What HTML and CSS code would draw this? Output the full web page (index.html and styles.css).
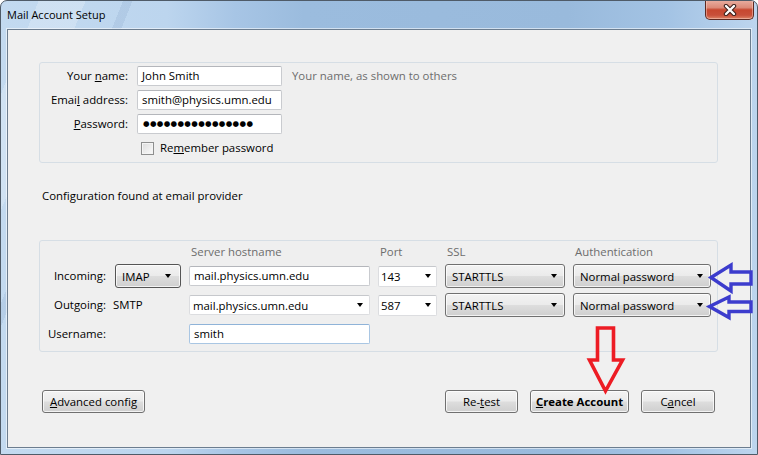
FILE: index.html
```html
<!DOCTYPE html>
<html>
<head>
<meta charset="utf-8">
<title>Mail Account Setup</title>
<link rel="stylesheet" href="styles.css">
</head>
<body>
<div class="window">
  <div class="titlebar">
    <span class="title">Mail Account Setup</span>
    <div class="close">
      <svg width="16" height="12" viewBox="0 0 16 12">
        <path d="M4 2 L12 10 M12 2 L4 10" stroke="#3a1f1a" stroke-width="4.4" stroke-linecap="round"/>
        <path d="M4 2 L12 10 M12 2 L4 10" stroke="#ffffff" stroke-width="2.4" stroke-linecap="round"/>
      </svg>
    </div>
  </div>
  <div class="client">
    <div class="box identity">
      <label class="lbl">Your <u>n</u>ame:</label>
      <div class="field">John Smith</div>
      <span class="hint">Your name, as shown to others</span>

      <label class="lbl">Emai<u>l</u> address:</label>
      <div class="field">smith@physics.umn.edu</div>
      <span></span>

      <label class="lbl"><u>P</u>assword:</label>
      <div class="field pw">●●●●●●●●●●●●●●●●</div>
      <span></span>

      <span></span>
      <div class="check"><span class="cb"></span><span>Re<u>m</u>ember password</span></div>
      <span></span>
    </div>

    <div class="status">Configuration found at email provider</div>

    <div class="box server">
      <span></span>
      <span></span>
      <span class="head">Server hostname</span>
      <span class="head">Port</span>
      <span class="head">SSL</span>
      <span class="head">Authentication</span>

      <span class="slbl">Incoming:</span>
      <div class="btn sel imap"><span>IMAP</span><i class="tri"></i></div>
      <div class="field host">mail.physics.umn.edu</div>
      <div class="combo port"><span>143</span><i class="tri"></i></div>
      <div class="btn sel"><span>STARTTLS</span><i class="tri"></i></div>
      <div class="btn sel"><span>Normal password</span><i class="tri"></i></div>

      <span class="slbl">Outgoing:</span>
      <span class="smtp">SMTP</span>
      <div class="combo host2"><span>mail.physics.umn.edu</span><i class="tri"></i></div>
      <div class="combo port"><span>587</span><i class="tri"></i></div>
      <div class="btn sel"><span>STARTTLS</span><i class="tri"></i></div>
      <div class="btn sel"><span>Normal password</span><i class="tri"></i></div>

      <span class="slbl">Username:</span>
      <span></span>
      <div class="field host user">smith</div>
    </div>

    <div class="actions">
      <div class="btn push adv"><span><u>A</u>dvanced config</span></div>
      <div class="spacer"></div>
      <div class="btn push retest"><span>Re-<u>t</u>est</span></div>
      <div class="btn push create"><span><u>C</u>reate Account</span></div>
      <div class="btn push cancel"><span>C<u>a</u>ncel</span></div>
    </div>
  </div>

  <svg class="annot" width="758" height="455" viewBox="0 0 758 455">
    <polygon points="711,277.5 731,265 731,272 751,272 751,284 731,284 731,291" fill="none" stroke="#3c3ccd" stroke-width="3.4" stroke-linejoin="miter"/>
    <polygon points="709.5,306.5 729,297 729,302 751,302 751,311.5 729,311.5 729,317.5" fill="none" stroke="#3c3ccd" stroke-width="3.4" stroke-linejoin="miter"/>
    <polygon points="597.5,328 613.5,328 613.5,360 622.5,360 605.5,391 589.5,360 597.5,360" fill="none" stroke="#ed1c24" stroke-width="3.6" stroke-linejoin="miter"/>
  </svg>
</div>
</body>
</html>
```

FILE: styles.css
```css
* { box-sizing: border-box; }
html, body { margin: 0; padding: 0; }
body {
  width: 758px;
  height: 455px;
  overflow: hidden;
  font-family: "Open Sans", "Noto Sans", sans-serif;
  font-size: 11.4px;
  color: #000;
  background: #ffffff;
}
u { text-decoration: underline; text-underline-offset: 1px; }

.window {
  position: relative;
  width: 758px;
  height: 455px;
  border: 1px solid #4f5b68;
  border-radius: 7px 7px 0 0;
  overflow: hidden;
  display: flex;
  flex-direction: column;
  background:
    linear-gradient(112deg, rgba(255,255,255,0) 0 4%, rgba(255,255,255,0.22) 4% 9%, rgba(255,255,255,0) 9% 13%, rgba(120,150,190,0.18) 13% 14%, rgba(255,255,255,0) 14% 100%),
    linear-gradient(90deg, #c3daf0 0%, #bcd5ee 22%, #a7c5e5 31%, #9bbcde 40%, #99badc 75%, #a3c3e4 88%, #bdd5ee 100%);
}

.titlebar {
  height: 28px;
  display: flex;
  justify-content: space-between;
  align-items: flex-start;
}
.title {
  padding: 6px 0 0 6px;
  font-size: 11px;
  line-height: 16px;
  color: #000;
}
.close {
  width: 49px;
  height: 20px;
  margin: -1px 3px 0 0;
  border: 1px solid #5e2a22;
  border-top: none;
  border-radius: 0 0 5px 5px;
  background: linear-gradient(#eab0a2 0%, #dc8a78 40%, #c7472f 52%, #c9503a 80%, #dd8466 100%);
  box-shadow: inset 0 0 0 1px rgba(255,220,210,0.45);
  display: flex;
  align-items: center;
  justify-content: center;
}
.close svg { display: block; }

.client {
  flex: 1;
  margin: 0 6px 6px 6px;
  border: 1px solid #6c7d8f;
  box-shadow: 0 0 0 1px rgba(255,255,255,0.55);
  background: #f0f0f0;
  padding: 32px 32px 0 31px;
  display: flex;
  flex-direction: column;
}

.box {
  border: 1px solid #d6dee5;
  border-radius: 3px;
  background: #efefef;
}

.identity {
  display: grid;
  grid-template-columns: 88px 145px 1fr;
  grid-template-rows: 20px 20px 20px 20px;
  column-gap: 9px;
  row-gap: 4px;
  padding: 3px 0 4px 0;
}
.lbl {
  text-align: right;
  line-height: 20px;
  white-space: nowrap;
}
.hint {
  margin-left: 1px;
  line-height: 20px;
  color: #6d6d6d;
}
.field {
  height: 20px;
  border: 1px solid #c9cbcf;
  border-top-color: #b4b6bb;
  border-radius: 2px;
  background: #fff;
  padding: 0 4px;
  line-height: 18px;
  white-space: nowrap;
  overflow: hidden;
}
.pw {
  font-family: "DejaVu Sans", sans-serif;
  font-size: 7.5px;
  letter-spacing: 0.35px;
  padding-left: 5px;
}
.check {
  display: flex;
  align-items: center;
  gap: 6px;
  padding-left: 4px;
  line-height: 20px;
  white-space: nowrap;
}
.cb {
  width: 13px;
  height: 13px;
  border: 1px solid #8e8f8f;
  background: linear-gradient(135deg, #dcdcdc, #fbfbfb);
  box-shadow: inset 0 0 0 1px #f4f4f4;
}

.status {
  margin: 25px 0 0 3px;
  line-height: 16px;
}

.server {
  margin-top: 36px;
  display: grid;
  grid-template-columns: 67px 66px 181px 59px 120px 138px;
  grid-template-rows: 14px 24px 24px 24px;
  column-gap: 8px;
  row-gap: 5px;
  padding: 4px 0 5px 0;
}
.head {
  color: #6d6d6d;
  line-height: 14px;
  padding-left: 2px;
  white-space: nowrap;
}
.slbl {
  text-align: right;
  padding-right: 1px;
  line-height: 24px;
  white-space: nowrap;
}
.smtp {
  line-height: 24px;
  margin-left: -2px;
}
.host { align-self: center; padding-left: 4px; }
.user { border-color: #a9c6e3; border-top-color: #8fb3d8; }

.btn {
  border: 1px solid #707070;
  border-radius: 3px;
  background: linear-gradient(#f3f3f3 0%, #ebebeb 48%, #dddddd 52%, #cfcfcf 100%);
  box-shadow: inset 0 0 0 1px rgba(255,255,255,0.75);
  display: flex;
  align-items: center;
  white-space: nowrap;
}
.sel {
  justify-content: space-between;
  padding: 0 7px 0 6px;
}
.imap { padding-right: 9px; border-color: #555; }
.tri {
  display: block;
  width: 0;
  height: 0;
  border-left: 3.5px solid transparent;
  border-right: 3.5px solid transparent;
  border-top: 4px solid #000;
}
.combo {
  align-self: center;
  height: 20px;
  border: 1px solid #dcdde0;
  border-top-color: #c6c8cc;
  border-radius: 2px;
  background: #fff;
  display: flex;
  align-items: center;
  justify-content: space-between;
  white-space: nowrap;
}
.port { height: 21px; padding: 0 5px 0 2px; }
.host2 { padding: 0 6px 0 3px; }

.actions {
  margin: 38px 3px 0 3px;
  display: flex;
  align-items: center;
}
.spacer { flex: 1; }
.push {
  height: 23px;
  justify-content: center;
}
.adv { width: 103px; }
.retest { width: 73px; }
.create { width: 99px; margin-left: 12px; font-weight: bold; }
.cancel { width: 74px; margin-left: 12px; }

.annot {
  position: absolute;
  left: -1px;
  top: -1px;
  pointer-events: none;
}
```
